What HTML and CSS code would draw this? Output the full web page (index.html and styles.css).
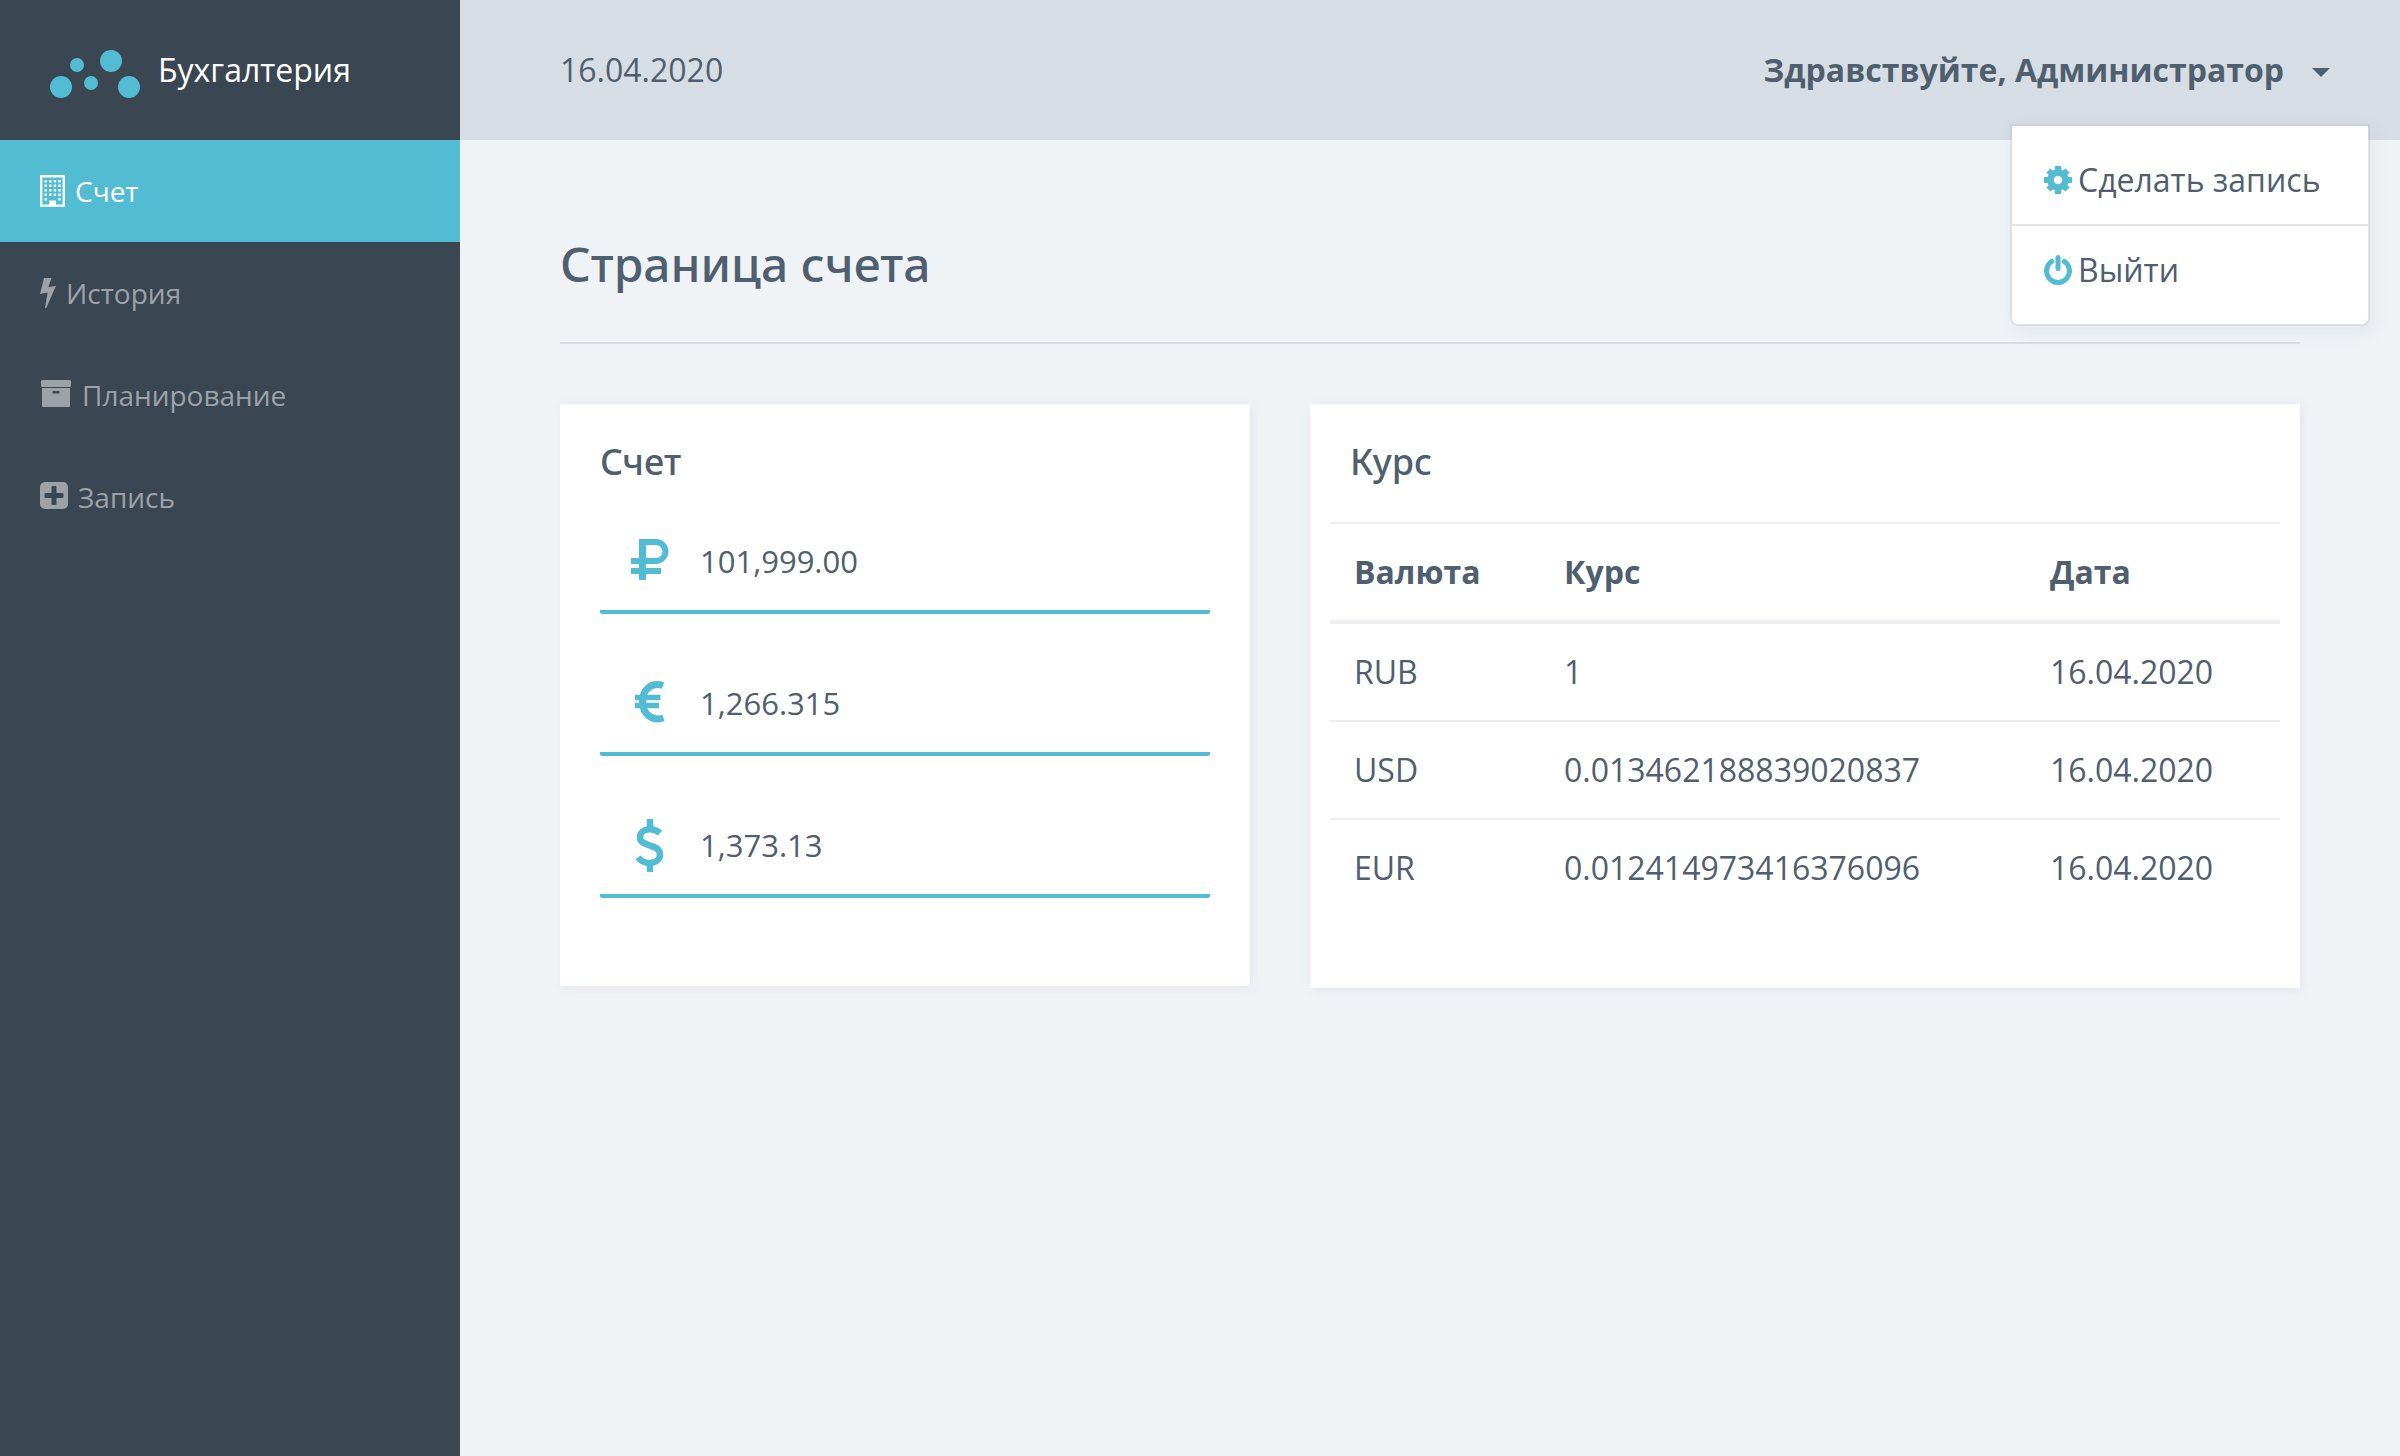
FILE: index.html
```html
<!DOCTYPE html>
<html lang="ru">
<head>
<meta charset="utf-8">
<meta name="viewport" content="width=device-width, initial-scale=1">
<title>Бухгалтерия</title>
<link rel="stylesheet" href="styles.css">
</head>
<body>
<div class="layout">
  <aside class="sidebar">
    <a class="brand" href="#">
      <svg class="brand-logo" width="90" height="48" viewBox="0 0 90 48" aria-hidden="true">
        <circle cx="11" cy="37" r="11"/><circle cx="27" cy="15" r="7"/><circle cx="41" cy="33" r="7"/><circle cx="61" cy="11" r="11"/><circle cx="79" cy="37" r="11"/>
      </svg>
      <span>Бухгалтерия</span>
    </a>
    <nav class="nav">
      <a class="nav-link active" href="#">
        <svg width="25" height="34" viewBox="0 0 25 34" aria-hidden="true">
          <path fill="none" stroke="currentColor" stroke-width="2.400" d="M1.200 2.200h22.600v29.400H1.200z"/>
          <path fill="none" stroke="currentColor" stroke-width="2.400" stroke-dasharray="2.400 2.200" d="M4.500 7.200h16.200M4.500 11.700h16.200M4.500 16.200h16.200M4.500 20.700h16.200"/>
          <path d="M4.500 24.200h2.400v2.400H4.500zM18.300 24.200h2.400v2.400h-2.400zM9 26.500h7v6H9z"/>
        </svg>
        <span>Счет</span>
      </a>
      <a class="nav-link" href="#">
        <svg width="16" height="34" viewBox="0 0 16 34" aria-hidden="true">
          <path d="M4 2h7.500L8.300 11.300 16 9.800 6.300 32H5l2.600-15.600L0 18z"/>
        </svg>
        <span>История</span>
      </a>
      <a class="nav-link" href="#">
        <svg width="32" height="34" viewBox="0 -1 32 34" aria-hidden="true">
          <rect x="1" y="1" width="30" height="7" rx="1"/>
          <path fill-rule="evenodd" d="M2 9h28v18a1 1 0 0 1-1 1H3a1 1 0 0 1-1-1zM13.500 12a1.200 1.200 0 0 0 0 2.400h5a1.200 1.200 0 0 0 0-2.400z"/>
        </svg>
        <span>Планирование</span>
      </a>
      <a class="nav-link" href="#">
        <svg width="28" height="34" viewBox="0 -1 28 34" aria-hidden="true">
          <path fill-rule="evenodd" d="M5 1h18a5 5 0 0 1 5 5v17a5 5 0 0 1-5 5H5a5 5 0 0 1-5-5V6a5 5 0 0 1 5-5zM12.500 5a1 1 0 0 0-1 1v6H5.500a1 1 0 0 0-1 1v3a1 1 0 0 0 1 1h6v6a1 1 0 0 0 1 1h3a1 1 0 0 0 1-1v-6h6a1 1 0 0 0 1-1v-3a1 1 0 0 0-1-1h-6V6a1 1 0 0 0-1-1z"/>
        </svg>
        <span>Запись</span>
      </a>
    </nav>
  </aside>

  <div class="page">
    <header class="topbar">
      <time datetime="2020-04-16">16.04.2020</time>
      <div class="user">
        <button class="user-toggle" type="button" aria-expanded="true">Здравствуйте, Администратор</button>
        <div class="menu">
          <a class="menu-link" href="#">
            <svg width="28" height="28" viewBox="-14 -14 28 28" aria-hidden="true">
              <circle r="7.500" fill="none" stroke="currentColor" stroke-width="6.500"/>
              <path fill="none" stroke="currentColor" stroke-width="6" d="M0-14v7M0 14V7M-14 0h7M14 0H7"/>
              <path fill="none" stroke="currentColor" stroke-width="6" d="M-9.500-9.500l3 3M9.500 9.500l-3-3M-9.500 9.500l3-3M9.500-9.500l-3 3"/>
            </svg>
            <span>Сделать запись</span>
          </a>
          <a class="menu-link" href="#">
            <svg width="28" height="30" viewBox="0 0 28 30" aria-hidden="true">
              <path fill="none" stroke="currentColor" stroke-width="5" stroke-linecap="round" d="M7.500 6.500A11.500 11.500 0 1 0 20.500 6.500M14 2.500v11"/>
            </svg>
            <span>Выйти</span>
          </a>
        </div>
      </div>
    </header>

    <main class="content">
      <h1 class="title">Страница счета</h1>
      <div class="cards">
        <section class="card">
          <h2 class="card-title">Счет</h2>
          <ul class="balances">
            <li class="balance">
              <svg viewBox="-11 -6 60 56" aria-hidden="true">
                <path stroke-width="6" d="M11 3h14a9.500 9.500 0 0 1 0 19H0M0 32h30"/><path stroke-width="7" d="M11.500 41V0"/>
              </svg>
              <span>101,999.00</span>
            </li>
            <li class="balance">
              <svg viewBox="-15 -6 60 56" aria-hidden="true">
                <path stroke-width="7" d="M28 4.500C15 .500 7.500 10 7.500 20.500S15 41 28.500 37"/><path stroke-width="5.500" d="M0 16.500h25.500M0 24.500h24"/>
              </svg>
              <span>1,266.315</span>
            </li>
            <li class="balance">
              <svg viewBox="-16 -2 60 56" aria-hidden="true">
                <path stroke-width="6.500" d="M24 14C17 8 4 9 4 18.500 4 28.500 24 24 24 35.500 24 45 9 47 2 38.500M14 0v9M14 44v9"/>
              </svg>
              <span>1,373.13</span>
            </li>
          </ul>
        </section>

        <section class="card card-wide">
          <h2 class="card-title">Курс</h2>
          <table class="rates">
            <thead>
              <tr><th scope="col">Валюта</th><th scope="col">Курс</th><th scope="col">Дата</th></tr>
            </thead>
            <tbody>
              <tr><td>RUB</td><td>1</td><td>16.04.2020</td></tr>
              <tr><td>USD</td><td>0.013462188839020837</td><td>16.04.2020</td></tr>
              <tr><td>EUR</td><td>0.012414973416376096</td><td>16.04.2020</td></tr>
            </tbody>
          </table>
        </section>
      </div>
    </main>
  </div>
</div>
</body>
</html>
```
FILE: styles.css
```css
:root {
  --accent: #52bcd3;
  --text: #4f5f6f;
  --dark: #3a4651;
}

* {
  box-sizing: border-box;
}

body {
  margin: 0;
  background: #eff3f6;
  color: var(--text);
  font: 32px/48px "Open Sans", "Noto Sans", sans-serif;
}

a {
  color: inherit;
  text-decoration: none;
}

svg {
  flex: none;
  fill: currentColor;
}

.layout {
  display: grid;
  grid-template-columns: 460px minmax(0, 1fr);
  min-height: 100vh;
}

.sidebar {
  background: var(--dark);
}

.brand {
  display: flex;
  align-items: center;
  gap: 18px;
  height: 140px;
  padding: 0 50px;
  color: #fff;
}

.brand-logo {
  margin-top: 8px;
  color: var(--accent);
}

.nav-link {
  display: flex;
  align-items: center;
  gap: 10px;
  height: 102px;
  padding: 0 40px;
  color: #9da2a9;
  font-size: 28px;
}

.nav-link.active {
  background: var(--accent);
  color: #fff;
}

.topbar {
  display: flex;
  align-items: center;
  justify-content: space-between;
  height: 140px;
  padding: 0 70px 0 100px;
  background: #d7dde4;
}

.user {
  position: relative;
}

.user-toggle {
  display: flex;
  align-items: center;
  gap: 28px;
  padding: 0;
  border: 0;
  background: none;
  color: inherit;
  font: inherit;
  font-weight: 700;
}

.user-toggle::after {
  content: "";
  margin-top: 4px;
  border: 9px solid transparent;
  border-top-color: currentColor;
  border-bottom: 0;
}

.menu {
  position: absolute;
  top: 78px;
  right: -40px;
  width: 360px;
  padding: 10px 0;
  border: 2px solid rgba(126, 142, 159, 0.15);
  border-radius: 0 0 8px 8px;
  background: #fff;
  background-clip: padding-box;
  box-shadow: 4px 6px 16px rgba(126, 142, 159, 0.1);
}

.menu-link {
  display: flex;
  align-items: center;
  gap: 6px;
  padding: 20px 32px;
  white-space: nowrap;
}

.menu-link + .menu-link {
  border-top: 2px solid #e5e5e5;
}

.menu-link svg {
  color: var(--accent);
}

.content {
  padding: 88px 100px 100px;
}

.title,
.card-title {
  font-family: "Noto Sans", "Open Sans", sans-serif;
  font-weight: 500;
}

.title {
  margin: 0 0 60px;
  padding-bottom: 42px;
  border-bottom: 2px solid #d7dde4;
  font-size: 48px;
  line-height: 72px;
}

.cards {
  display: grid;
  grid-template-columns: repeat(12, minmax(0, 1fr));
  gap: 60px;
  align-items: start;
}

.card {
  grid-column: span 5;
  padding: 40px;
  background: #fff;
  box-shadow: 2px 2px 10px rgba(126, 142, 159, 0.1);
}

.card-wide {
  grid-column: span 7;
  padding: 40px 20px;
}

.card-title {
  margin: 0;
  font-size: 36px;
  line-height: 36px;
}

.card-wide .card-title {
  padding: 0 20px;
}

.balances {
  margin: 32px 0 48px;
  padding: 0;
  list-style: none;
}

.balance {
  display: flex;
  align-items: center;
  gap: 20px;
  height: 102px;
  padding-left: 20px;
  border-bottom: 4px solid var(--accent);
  border-radius: 2px;
  font-size: 31px;
}

.balance + .balance {
  margin-top: 40px;
}

.balance svg {
  width: 60px;
  height: 56px;
  fill: none;
  stroke: var(--accent);
}

.rates {
  width: 100%;
  margin: 42px 0 32px;
  border-spacing: 0;
}

.rates th,
.rates td {
  padding: 24px;
  border-top: 2px solid #eceeef;
  text-align: left;
}

.rates th {
  border-bottom: 4px solid #eceeef;
  font-weight: 700;
}

.rates tbody tr:first-child td {
  border-top: 0;
}
```
